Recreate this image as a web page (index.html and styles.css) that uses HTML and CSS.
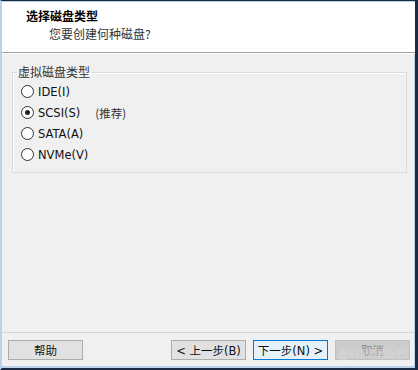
FILE: index.html
```html
<!DOCTYPE html>
<html lang="zh-CN">
<head>
    <meta charset="UTF-8">
    <title>新建虚拟机向导</title>
    <link rel="stylesheet" href="styles.css">
</head>
<body>

<div class="window">
    <div class="header">
        <div class="title">选择磁盘类型</div>
        <div class="subtitle">您要创建何种磁盘?</div>
    </div>

    <div class="content">
        <fieldset class="group">
            <legend>虚拟磁盘类型</legend>
            <label class="radio"><span class="dot"></span>IDE(I)</label>
            <label class="radio checked"><span class="dot"></span>SCSI(S)<span class="hint">(推荐)</span></label>
            <label class="radio"><span class="dot"></span>SATA(A)</label>
            <label class="radio"><span class="dot"></span>NVMe(V)</label>
        </fieldset>
    </div>

    <div class="footer">
        <button class="btn">帮助</button>
        <div class="spacer"></div>
        <button class="btn">&lt; 上一步(B)</button>
        <button class="btn focus">下一步(N) &gt;</button>
        <button class="btn disabled">取消</button>
        <span class="watermark">@ITPUB博客</span>
    </div>
</div>

</body>
</html>
```

FILE: styles.css
```css
body {
    margin: 0;
    padding: 0;
    background-color: #1b2a44;
    font-family: "Liberation Sans", "Noto Sans CJK SC", sans-serif;
    font-size: 12px;
    color: #000;
}
.window {
    width: 418px;
    height: 370px;
    box-sizing: border-box;
    border-top: 1px solid #1b2a44;
    border-left: 2px solid #b9d1ea;
    border-right: 3px solid #1b2a44;
    border-bottom: 2px solid #1b2a44;
    background-color: #f0f0f0;
    display: flex;
    flex-direction: column;
    position: relative;
    box-shadow: inset 0 1px 0 #b9d1ea, inset -1px 0 0 #b9d1ea, inset 0 -2px 0 #b9d1ea;
}
.header {
    height: 52px;
    background-color: #fff;
    border-top: 1px solid #b9d1ea;
    border-bottom: 1px solid #a0a0a0;
    box-sizing: border-box;
    padding: 6px 0 0 24px;
}
.title {
    font-family: "Noto Sans CJK SC", sans-serif;
    font-weight: bold;
    font-size: 12px;
    line-height: 16px;
}
.subtitle {
    font-family: "Noto Sans CJK SC", sans-serif;
    font-size: 12px;
    line-height: 16px;
    margin: 2px 0 0 23px;
    color: #333;
}
.content {
    flex: 1;
    padding: 11px 8px 0 10px;
    border-top: 1px solid #fff;
}
.group {
    margin: 0;
    height: 108px;
    box-sizing: border-box;
    border: 1px solid #dcdcdc;
    box-shadow: inset 1px 1px 0 #fff;
    padding: 2px 0 0 8px;
}
.group legend {
    font-family: "Noto Sans CJK SC", sans-serif;
    color: #333;
    padding: 0 1px;
    margin-left: -4px;
    line-height: 14px;
}
.radio {
    display: flex;
    align-items: center;
    height: 21px;
    font-family: "DejaVu Sans", sans-serif;
    font-size: 11.5px;
    color: #111;
}
.dot {
    width: 11px;
    height: 11px;
    border: 1px solid #333;
    border-radius: 50%;
    background-color: #fff;
    margin-right: 4px;
    position: relative;
}
.checked .dot::after {
    content: "";
    position: absolute;
    left: 3px;
    top: 3px;
    width: 5px;
    height: 5px;
    border-radius: 50%;
    background-color: #222;
}
.hint {
    font-family: "Noto Sans CJK SC", sans-serif;
    color: #333;
    margin-left: 15px;
}
.footer {
    height: 34px;
    border-top: 1px solid #d5d5d5;
    display: flex;
    align-items: flex-start;
    padding: 7px 5px 0 6px;
    gap: 7px;
    position: relative;
    box-sizing: border-box;
    margin-bottom: 2px;
}
.spacer {
    flex: 1;
}
.btn {
    width: 75px;
    height: 20px;
    padding: 0;
    background-color: #e1e1e1;
    border: 1px solid #adadad;
    font-family: "DejaVu Sans", "Noto Sans CJK SC", sans-serif;
    font-size: 11.5px;
    color: #111;
}
.btn.focus {
    border-color: #0078d7;
    background-color: #e5f1fb;
}
.btn.disabled {
    background-color: #cccccc;
    border-color: #bfbfbf;
    color: #8a8a8a;
}
.watermark {
    position: absolute;
    right: 6px;
    top: 13px;
    font-family: "Noto Sans CJK SC", sans-serif;
    font-size: 12px;
    line-height: 14px;
    color: #c4c4c4;
    text-shadow: 0 0 1px #fff;
    pointer-events: none;
}
```
